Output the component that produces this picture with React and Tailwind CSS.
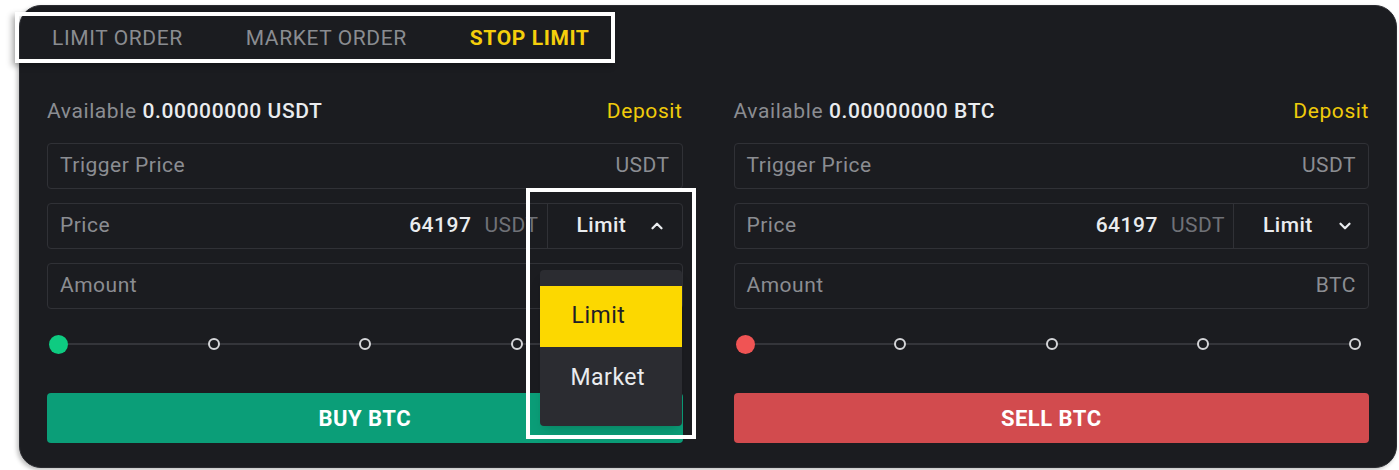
import { ChevronUp, ChevronDown } from "lucide-react";

const font = { fontFamily: "Roboto, 'Liberation Sans', sans-serif" };

function Slider({ color }) {
  return (
    <div className="relative mt-[25px] flex h-[20px] items-center justify-between pl-[2px] pr-[8px]">
      <div className="absolute left-[10px] right-[12px] top-[9px] h-[2px] bg-[#34353a]" />
      <div className={`relative h-[19px] w-[19px] rounded-full ${color}`} />
      {[0, 1, 2, 3].map((i) => (
        <div key={i} className="relative h-[12px] w-[12px] rounded-full border-2 border-[#d4d5d8] bg-[#1b1c20]" />
      ))}
    </div>
  );
}

function Field({ label, unit }) {
  return (
    <div className="flex h-[46px] items-center justify-between rounded-[4px] border border-[#303136] px-[12px] text-[21px] tracking-[0.5px] text-[#8b8d92]">
      <span>{label}</span>
      <span>{unit}</span>
    </div>
  );
}

function PriceField({ open }) {
  return (
    <div className="relative flex h-[46px] items-center rounded-[4px] border border-[#303136] text-[21px] tracking-[0.5px]">
      <span className="pl-[12px] text-[#8b8d92]">Price</span>
      <span className="ml-auto font-medium text-[#eaecef]">64197</span>
      <span className="ml-[13px] pr-[8px] text-[#6f7177]">USDT</span>
      <div className="flex h-full w-[135px] items-center border-l border-[#303136] pl-[29px] font-medium text-[#eaecef]">
        <span>Limit</span>
        {open ? (
          <ChevronUp className="ml-[22px] h-[18px] w-[18px]" strokeWidth={3} />
        ) : (
          <ChevronDown className="ml-[23px] h-[18px] w-[18px]" strokeWidth={3} />
        )}
      </div>
      {open && (
        <div className="absolute right-[0px] top-[66px] z-10 w-[142px] rounded-[4px] bg-[#2b2c31] pb-[16px] pt-[16px] shadow-lg">
          <div className="flex h-[61px] items-center bg-[#fcd800] pl-[32px] text-[23px] tracking-[0.5px] text-[#1e2026]">Limit</div>
          <div className="flex h-[63px] items-center pl-[31px] text-[23px] tracking-[0.5px] text-[#eaecef]">Market</div>
        </div>
      )}
    </div>
  );
}

function Panel({ coin, unit, side }) {
  const buy = side === "buy";
  return (
    <div className="flex flex-col">
      <div className="flex h-[26px] items-center justify-between text-[21px] tracking-[0.6px]">
        <span className="text-[#8b8d92]">
          Available <span className="font-medium text-[#eaecef]">0.00000000 {coin}</span>
        </span>
        <span className="text-[#f0cb0b]">Deposit</span>
      </div>
      <div className="mt-[18px] flex flex-col gap-[14px]">
        <Field label="Trigger Price" unit="USDT" />
        <PriceField open={buy} />
        <Field label="Amount" unit={unit} />
      </div>
      <Slider color={buy ? "bg-[#0ecb81]" : "bg-[#f05454]"} />
      <button
        className={`mt-[39px] h-[50px] rounded-[4px] text-[22px] font-bold tracking-[0.5px] text-white ${
          buy ? "bg-[#0b9e78]" : "bg-[#d24b4e]"
        }`}
      >
        {buy ? "BUY BTC" : "SELL BTC"}
      </button>
    </div>
  );
}

export default function App() {
  return (
    <div className="relative h-[470px] w-[1399px] overflow-hidden bg-white" style={font}>
      <div className="ml-[19px] mt-[5px] h-[463px] w-[1378px] rounded-[22px] border border-[#2a2b30] bg-[#1b1c20] shadow-[-2px_2px_4px_rgba(0,0,0,0.25)]">
        <div className="flex h-[66px] items-center gap-[63px] pl-[32px] text-[21px] tracking-[0.6px]">
          <span className="text-[#8a8c91]">LIMIT ORDER</span>
          <span className="text-[#8a8c91]">MARKET ORDER</span>
          <span className="font-bold text-[#f5cf0c]">STOP LIMIT</span>
        </div>
        <div className="grid grid-cols-2 gap-[51px] px-[27px] pt-[27px]">
          <Panel coin="USDT" unit="" side="buy" />
          <Panel coin="BTC" unit="BTC" side="sell" />
        </div>
      </div>
      <div className="pointer-events-none absolute left-[15px] top-[12px] h-[51px] w-[600px] border-[4px] border-white shadow-[-3px_3px_6px_rgba(0,0,0,0.3)]" />
      <div className="pointer-events-none absolute left-[526px] top-[188px] z-20 h-[251px] w-[170px] border-[4px] border-white" />
    </div>
  );
}
